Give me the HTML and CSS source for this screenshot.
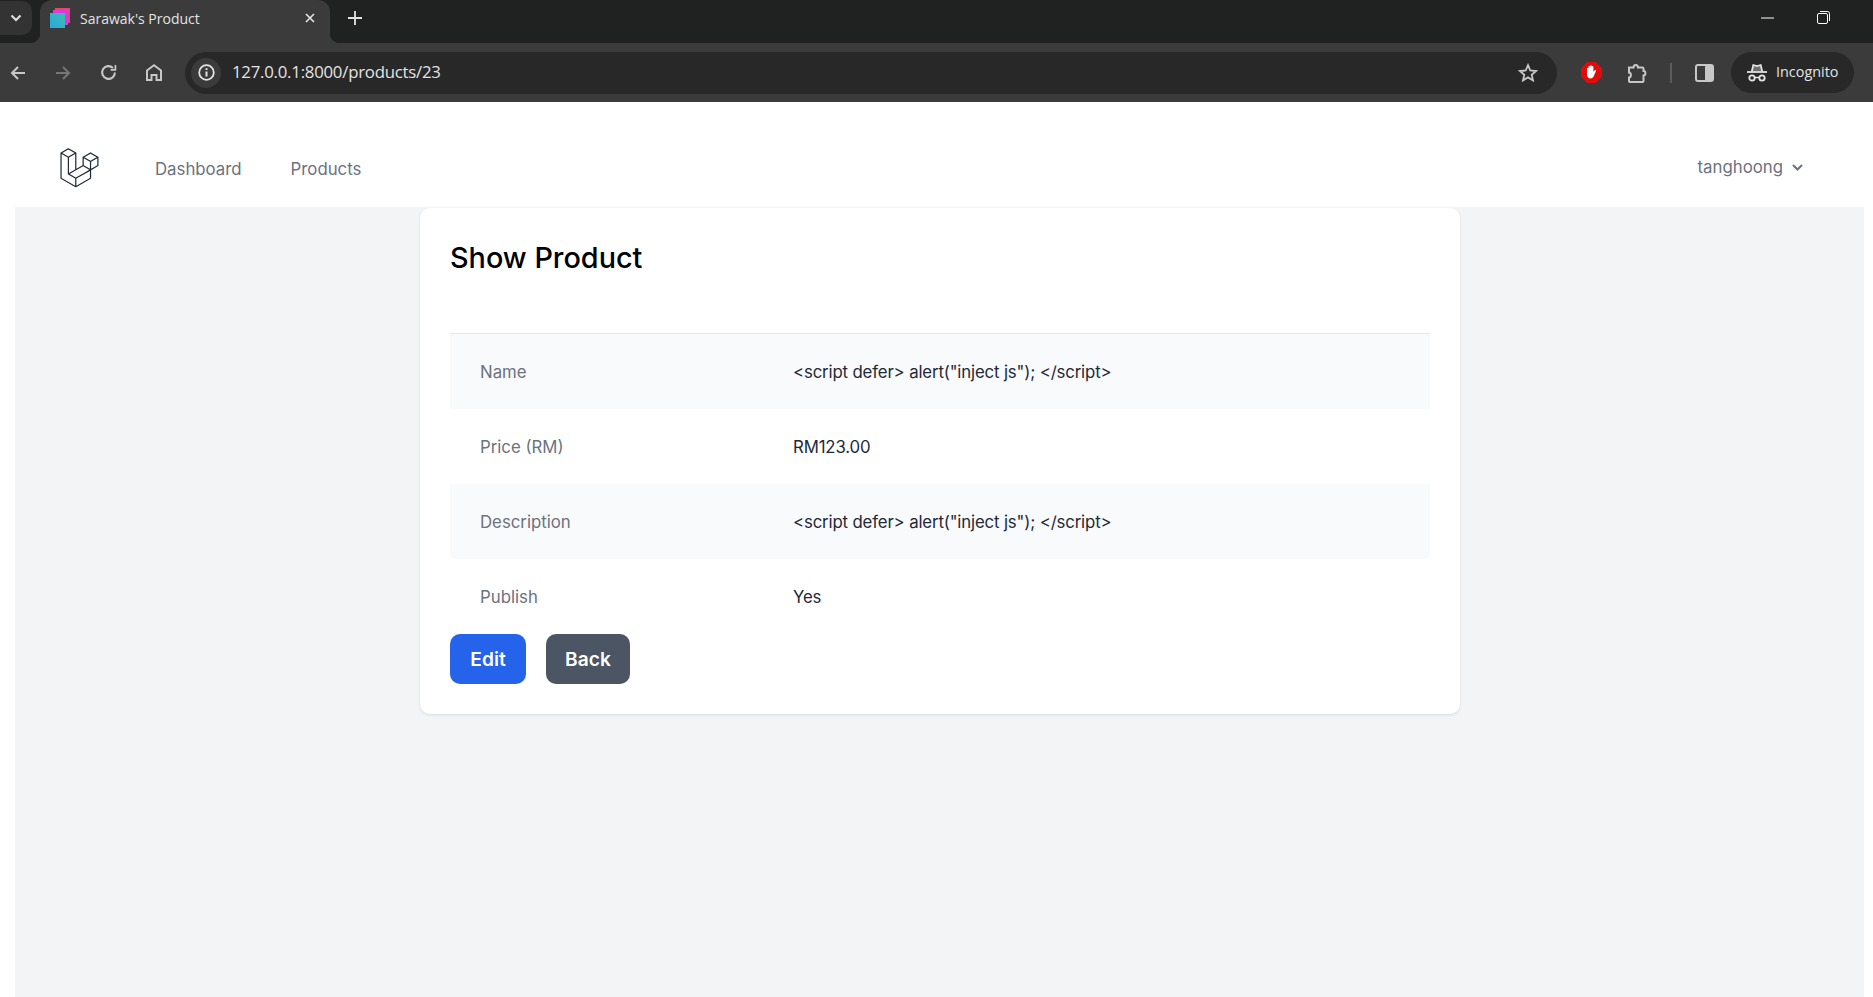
FILE: index.html
```html
<!DOCTYPE html>
<html lang="en">
<head>
  <meta charset="UTF-8">
  <meta name="viewport" content="width=device-width, initial-scale=1">
  <title>Sarawak's Product</title>
  <link rel="stylesheet" href="styles.css">
</head>
<body>
  <div class="tabstrip">
    <div class="tab-search">
      <svg width="12" height="8" viewBox="0 0 12 8"><path d="M1.500 1.500 6 6l4.500-4.500" fill="none" stroke="#e3e3e3" stroke-width="2"/></svg>
    </div>
    <div class="tab">
      <svg class="favicon" width="20" height="20" viewBox="0 0 20 20">
        <defs>
          <linearGradient id="fav-back" x1="0" y1="0" x2="1" y2="1"><stop offset="0" stop-color="#e8503a"/><stop offset="1" stop-color="#e92fd0"/></linearGradient>
          <linearGradient id="fav-front" x1="0" y1="1" x2="1" y2="0"><stop offset="0" stop-color="#2aa5e8"/><stop offset="1" stop-color="#3cc0a8"/></linearGradient>
        </defs>
        <rect x="5" y="0" width="15" height="15" fill="url(#fav-back)"/>
        <rect x="3" y="2" width="15" height="15" fill="#e236e0"/>
        <rect x="0" y="5" width="15" height="15" fill="url(#fav-front)"/>
      </svg>
      <span class="tab-title">Sarawak's Product</span>
      <svg class="tab-close" width="10" height="10" viewBox="0 0 10 10"><path d="M1 1l8 8M9 1l-8 8" stroke="#e3e3e3" stroke-width="1.700"/></svg>
    </div>
    <svg class="tab-new" width="14" height="14" viewBox="0 0 14 14"><path d="M7 0v14M0 7h14" stroke="#e3e3e3" stroke-width="1.800"/></svg>
    <div class="win-controls">
      <svg width="13" height="2" viewBox="0 0 13 2"><path d="M0 1h13" stroke="#fff" stroke-width="1"/></svg>
      <svg width="13" height="13" viewBox="0 0 13 13" fill="none" stroke="#fff"><rect x=".5" y="2.500" width="10" height="10" rx="1.500"/><path d="M3 .5h7.500a2 2 0 0 1 2 2V10"/></svg>
    </div>
  </div>

  <div class="toolbar">
    <div class="nav-btns">
      <svg width="16" height="16" viewBox="0 0 16 16" fill="none" stroke="#c7c7c7" stroke-width="2"><path d="M15 8H2M8 2 2 8l6 6"/></svg>
      <svg width="16" height="16" viewBox="0 0 16 16" fill="none" stroke="#767676" stroke-width="2"><path d="M1 8h13M8 2l6 6-6 6"/></svg>
      <svg width="17" height="17" viewBox="0 0 16 16" fill="none" stroke="#c7c7c7" stroke-width="2"><path d="M14 8a6 6 0 1 1-1.800-4.300"/><path d="M14.500 1v4.500H10" stroke-width="1.600"/></svg>
      <svg width="16" height="17" viewBox="0 0 16 17" fill="none" stroke="#c7c7c7" stroke-width="2"><path d="M1 16V6.500L8 1.300l7 5.200V16h-4.500v-5h-5v5z"/></svg>
    </div>
    <div class="omnibox">
      <span class="site-info">
        <svg width="17" height="17" viewBox="0 0 17 17" fill="none" stroke="#e3e3e3"><circle cx="8.500" cy="8.500" r="7.300" stroke-width="1.800"/><path d="M8.500 7.500v5M8.500 4.300v1.800" stroke-width="2"/></svg>
      </span>
      <span class="url">127.0.0.1:8000/products/23</span>
      <svg class="star" width="20" height="19" viewBox="0 0 20 19" fill="none" stroke="#c7c7c7" stroke-width="1.800"><path d="M10 2.200l2.300 5.300 5.700.5-4.300 3.800 1.300 5.600-5-3-5 3 1.300-5.600L2 8l5.700-.5z"/></svg>
    </div>
    <div class="toolbar-end">
      <svg class="adblock" width="21" height="21" viewBox="0 0 21 21">
        <path d="M6.200 0h8.600L21 6.200v8.600L14.800 21H6.200L0 14.800V6.200z" fill="#e20b0b"/>
        <path d="M6 10V6.500c0-1 1.500-1 1.500 0V4.800c0-1 1.600-1 1.600 0V4c0-1 1.700-1 1.700 0v.8c0-1 1.600-1 1.600 0v5l1.300-1.600c.7-.7 1.800 0 1.300.9l-2.200 5c-.6 1.400-1.700 2.400-3.300 2.400H9.500c-2 0-3.500-1.500-3.500-3.500z" fill="#fff"/>
      </svg>
      <svg class="puzzle" width="21" height="20" viewBox="0 0 21 20" fill="none" stroke="#c7c7c7" stroke-width="2"><path d="M2 4.500h4.500c0-3.500 4.500-3.500 4.500 0h4.500a1 1 0 0 1 1 1V8c2.500 0 2.500 4.500 0 4.500V18a1 1 0 0 1-1 1H3a1 1 0 0 1-1-1v-3.500c2.500 0 2.500-5 0-5z"/></svg>
      <span class="sep"></span>
      <svg class="panel" width="19" height="18" viewBox="0 0 19 18"><rect x="10" y="1" width="8" height="16" rx="1.500" fill="#c7c7c7"/><rect x="1" y="1" width="17" height="16" rx="2" fill="none" stroke="#c7c7c7" stroke-width="2"/></svg>
      <div class="incognito">
        <svg width="20" height="19" viewBox="0 0 20 19" fill="none" stroke="#e3e3e3"><path d="M4.800 8.500 6.300 2 10 3l3.700-1 1.500 6.500" stroke-width="1.800" fill="#6e6e6e"/><path d="M0 9h20" stroke-width="1.800"/><circle cx="5" cy="15" r="2.700" stroke-width="1.800"/><circle cx="15" cy="15" r="2.700" stroke-width="1.800"/><path d="M7.800 14.500h4.400" stroke-width="1.500"/></svg>
        <span class="incognito-label">Incognito</span>
      </div>
    </div>
  </div>

  <nav class="topnav">
    <div class="topnav-left">
      <svg class="logo" width="39" height="40" viewBox="0 0 62 65" fill="#1f2937"><path d="M61.8548 14.6253C61.8778 14.7102 61.8895 14.7978 61.8897 14.8858V28.5615C61.8898 28.737 61.8434 28.9095 61.7554 29.0614C61.6675 29.2132 61.5409 29.3392 61.3887 29.4265L49.9104 36.0351V49.1337C49.9104 49.4902 49.7209 49.8192 49.4118 49.9987L25.4519 63.7916C25.3971 63.8227 25.3372 63.8427 25.2774 63.8639C25.255 63.8714 25.2338 63.8851 25.2101 63.8913C25.0426 63.9354 24.8666 63.9354 24.6991 63.8913C24.6716 63.8838 24.6467 63.8689 24.6205 63.8589C24.5657 63.8389 24.5084 63.8215 24.456 63.7916L0.501061 49.9987C0.348882 49.9113 0.222437 49.7853 0.134469 49.6334C0.0465019 49.4816 0.000120578 49.3092 0 49.1337L0 8.10652C0 8.01678 0.0124642 7.92953 0.0348998 7.84477C0.0423783 7.8161 0.0598282 7.78993 0.0697995 7.76126C0.0884958 7.70891 0.105946 7.65531 0.133367 7.6067C0.152063 7.5743 0.179485 7.54812 0.20192 7.51821C0.230588 7.47832 0.256763 7.43719 0.290416 7.40229C0.319084 7.37362 0.356476 7.35243 0.388883 7.32751C0.425029 7.29759 0.457436 7.26518 0.498568 7.2415L12.4779 0.345059C12.6296 0.257786 12.8015 0.211853 12.9765 0.211853C13.1515 0.211853 13.3234 0.257786 13.475 0.345059L25.4531 7.2415H25.4556C25.4955 7.26643 25.5292 7.29759 25.5653 7.32626C25.5977 7.35119 25.6339 7.37362 25.6625 7.40104C25.6974 7.43719 25.7224 7.47832 25.7523 7.51821C25.7735 7.54812 25.8021 7.5743 25.8196 7.6067C25.8483 7.65656 25.8645 7.70891 25.8844 7.76126C25.8944 7.78993 25.9118 7.8161 25.9193 7.84602C25.9423 7.93096 25.954 8.01853 25.9542 8.10652V33.7317L35.9355 27.9844V14.8846C35.9355 14.7973 35.948 14.7088 35.9704 14.6253C35.9792 14.5954 35.9954 14.5692 36.0053 14.5405C36.0253 14.4882 36.0427 14.4346 36.0702 14.386C36.0888 14.3536 36.1163 14.3274 36.1375 14.2975C36.1674 14.2576 36.1923 14.2165 36.2272 14.1816C36.2559 14.1529 36.292 14.1317 36.3244 14.1068C36.3618 14.0769 36.3942 14.0445 36.4341 14.0208L48.4147 7.12434C48.5663 7.03694 48.7383 6.99094 48.9133 6.99094C49.0883 6.99094 49.2602 7.03694 49.4118 7.12434L61.3899 14.0208C61.4323 14.0457 61.4647 14.0769 61.5021 14.1055C61.5333 14.1305 61.5694 14.1529 61.5981 14.1803C61.633 14.2165 61.6579 14.2576 61.6878 14.2975C61.7103 14.3274 61.7377 14.3536 61.7551 14.386C61.7838 14.4346 61.8 14.4882 61.8199 14.5405C61.8312 14.5692 61.8474 14.5954 61.8548 14.6253ZM59.893 27.9844V16.6121L55.7013 19.0252L49.9104 22.3593V33.7317L59.8942 27.9844H59.893ZM47.9149 48.5566V37.1768L42.2187 40.4299L25.953 49.7133V61.2003L47.9149 48.5566ZM1.99677 9.83281V48.5566L23.9562 61.199V49.7145L12.4841 43.2219L12.4804 43.2194L12.4754 43.2169C12.4368 43.1945 12.4044 43.1621 12.3682 43.1347C12.3371 43.1097 12.3009 43.0898 12.2735 43.0624L12.271 43.0586C12.2386 43.0275 12.2162 42.9888 12.1887 42.9539C12.1638 42.9203 12.1339 42.8916 12.114 42.8567L12.1127 42.853C12.0903 42.8156 12.0766 42.7707 12.0604 42.7283C12.0442 42.6909 12.023 42.656 12.013 42.6161C12.0005 42.5688 11.998 42.5177 11.9931 42.4691C11.9881 42.4317 11.9781 42.3943 11.9781 42.3569V15.5801L6.18848 12.2446L1.99677 9.83281ZM12.9777 2.36177L2.99764 8.10652L12.9752 13.8513L22.9541 8.10527L12.9752 2.36177H12.9777ZM18.1678 38.2138L23.9574 34.8809V9.83281L19.7657 12.2459L13.9749 15.5801V40.6281L18.1678 38.2138ZM48.9133 9.14105L38.9344 14.8858L48.9133 20.6305L58.8909 14.8846L48.9133 9.14105ZM47.9149 22.3593L42.124 19.0252L37.9323 16.6121V27.9844L43.7219 31.3174L47.9149 33.7317V22.3593ZM24.9533 47.987L39.59 39.631L46.9065 35.4555L36.9352 29.7145L25.4544 36.3242L14.9907 42.3482L24.9533 47.987Z"/></svg>
      <a class="nav-link" href="#">Dashboard</a>
      <a class="nav-link" href="#">Products</a>
    </div>
    <div class="user-menu">
      <span>tanghoong</span>
      <svg width="11" height="7" viewBox="0 0 11 7" fill="none" stroke="#6b7280" stroke-width="2"><path d="M1 1l4.500 4.500L10 1"/></svg>
    </div>
  </nav>

  <main class="content">
    <section class="card">
      <h2 class="card-title">Show Product</h2>
      <table class="details">
        <tr><th>Name</th><td>&lt;script defer&gt; alert("inject js"); &lt;/script&gt;</td></tr>
        <tr><th>Price (RM)</th><td>RM123.00</td></tr>
        <tr><th>Description</th><td>&lt;script defer&gt; alert("inject js"); &lt;/script&gt;</td></tr>
        <tr><th>Publish</th><td>Yes</td></tr>
      </table>
      <div class="actions">
        <a class="btn btn-blue" href="#">Edit</a>
        <a class="btn btn-gray" href="#">Back</a>
      </div>
    </section>
  </main>
</body>
</html>
```

FILE: styles.css
```css
html, body { height: 100%; }
body { margin: 0; display: flex; flex-direction: column; background: #fff; font-family: Inter, "Noto Sans", sans-serif; overflow: hidden; }

/* browser frame */
.tabstrip { height: 43px; flex: none; display: flex; align-items: flex-start; background: #202221; }
.tab-search { width: 32px; height: 34px; margin-top: 1px; display: flex; align-items: center; justify-content: center; background: #333; border-radius: 0 10px 10px 0; }
.tab { position: relative; width: 290px; height: 43px; margin-left: 8px; padding: 0 17px 7px 10px; box-sizing: border-box; display: flex; align-items: center; background: #3b3b3b; border-radius: 12px 12px 0 0; }
.tab::before, .tab::after { content: ""; position: absolute; bottom: 0; width: 10px; height: 10px; }
.tab::before { left: -10px; background: radial-gradient(circle at 0 0, transparent 10px, #3b3b3b 10.500px); }
.tab::after { right: -10px; background: radial-gradient(circle at 100% 0, transparent 10px, #3b3b3b 10.500px); }
.favicon { flex: none; }
.tab-title { margin-left: 10px; flex: 1; color: #e3e3e3; font: 14px "Open Sans", sans-serif; }
.tab-close { margin-right: -2px; }
.tab-new { margin: 11px 0 0 18px; }
.win-controls { margin-left: auto; padding: 11px 43px 0 0; display: flex; align-items: center; gap: 43px; }

.toolbar { height: 59px; flex: none; display: flex; align-items: center; background: #3b3b3b; }
.nav-btns { width: 185px; padding-left: 10px; box-sizing: border-box; display: flex; align-items: center; gap: 29px; }
.omnibox { width: 1372px; height: 42px; display: flex; align-items: center; background: #282828; border-radius: 21px; }
.site-info { width: 30px; height: 30px; margin-left: 6px; display: flex; align-items: center; justify-content: center; background: #3b3b3b; border-radius: 50%; }
.url { margin-left: 11px; padding-bottom: 2px; flex: 1; color: #e3e3e3; font: 16.800px "Open Sans", sans-serif; letter-spacing: -0.240px; }
.star { margin-right: 19px; }
.toolbar-end { flex: 1; display: flex; align-items: center; }
.adblock { margin-left: 24px; }
.puzzle { margin-left: 25px; }
.sep { width: 2px; height: 20px; margin-left: 22px; background: #5c5c5c; }
.panel { margin-left: 23px; }
.incognito { height: 41px; margin-left: 17px; padding: 0 16px 0 16px; display: flex; align-items: center; gap: 9px; background: #282828; border-radius: 21px; color: #e3e3e3; font: 14.400px "Open Sans", sans-serif; }
.incognito-label { padding-bottom: 2px; }

/* page nav */
.topnav { height: 105px; flex: none; padding: 0 70px 0 60px; box-sizing: border-box; display: flex; align-items: center; justify-content: space-between; background: #fff; }
.topnav-left { display: flex; align-items: center; margin-top: 29px; }
.logo { margin-top: -3px; }
.nav-link { margin-left: 56px; color: #6b7280; font-size: 16.800px; text-decoration: none; }
.nav-link + .nav-link { margin-left: 49px; }
.user-menu { margin-top: 25px; display: flex; align-items: center; gap: 9px; color: #6b7280; font-size: 16.800px; }

.content { flex: 1; margin: 0 9px 0 15px; padding-top: 1px; background: #f3f4f6; }
.card { width: 1040px; height: 506px; margin-left: 405px; padding: 30px; box-sizing: border-box; background: #fff; border-radius: 10px; box-shadow: 0 1px 3px rgba(0, 0, 0, .1); }
.card-title { height: 95px; margin: 0; padding-top: 3px; box-sizing: border-box; color: #000; font-size: 28.800px; font-weight: 500; line-height: 1.2; }

.details { width: 100%; table-layout: fixed; border-collapse: collapse; border-top: 1px solid #e5e7eb; font-size: 16.800px; }
.details tr { height: 75px; }
.details tr:nth-child(odd) { background: #f9fafb; }
.details th { width: 343px; padding: 2px 0 0 30px; box-sizing: border-box; color: #6b7280; font-weight: 400; text-align: left; }
.details td { padding: 2px 0 0; color: #1f2937; letter-spacing: -0.150px; }

.actions { display: flex; gap: 20px; }
.btn { height: 50px; display: flex; align-items: center; justify-content: center; border-radius: 10px; color: #fff; font-size: 19.200px; font-weight: 600; text-decoration: none; }
.btn-blue { width: 76px; background: #2563eb; }
.btn-gray { width: 84px; background: #4b5563; }
```
